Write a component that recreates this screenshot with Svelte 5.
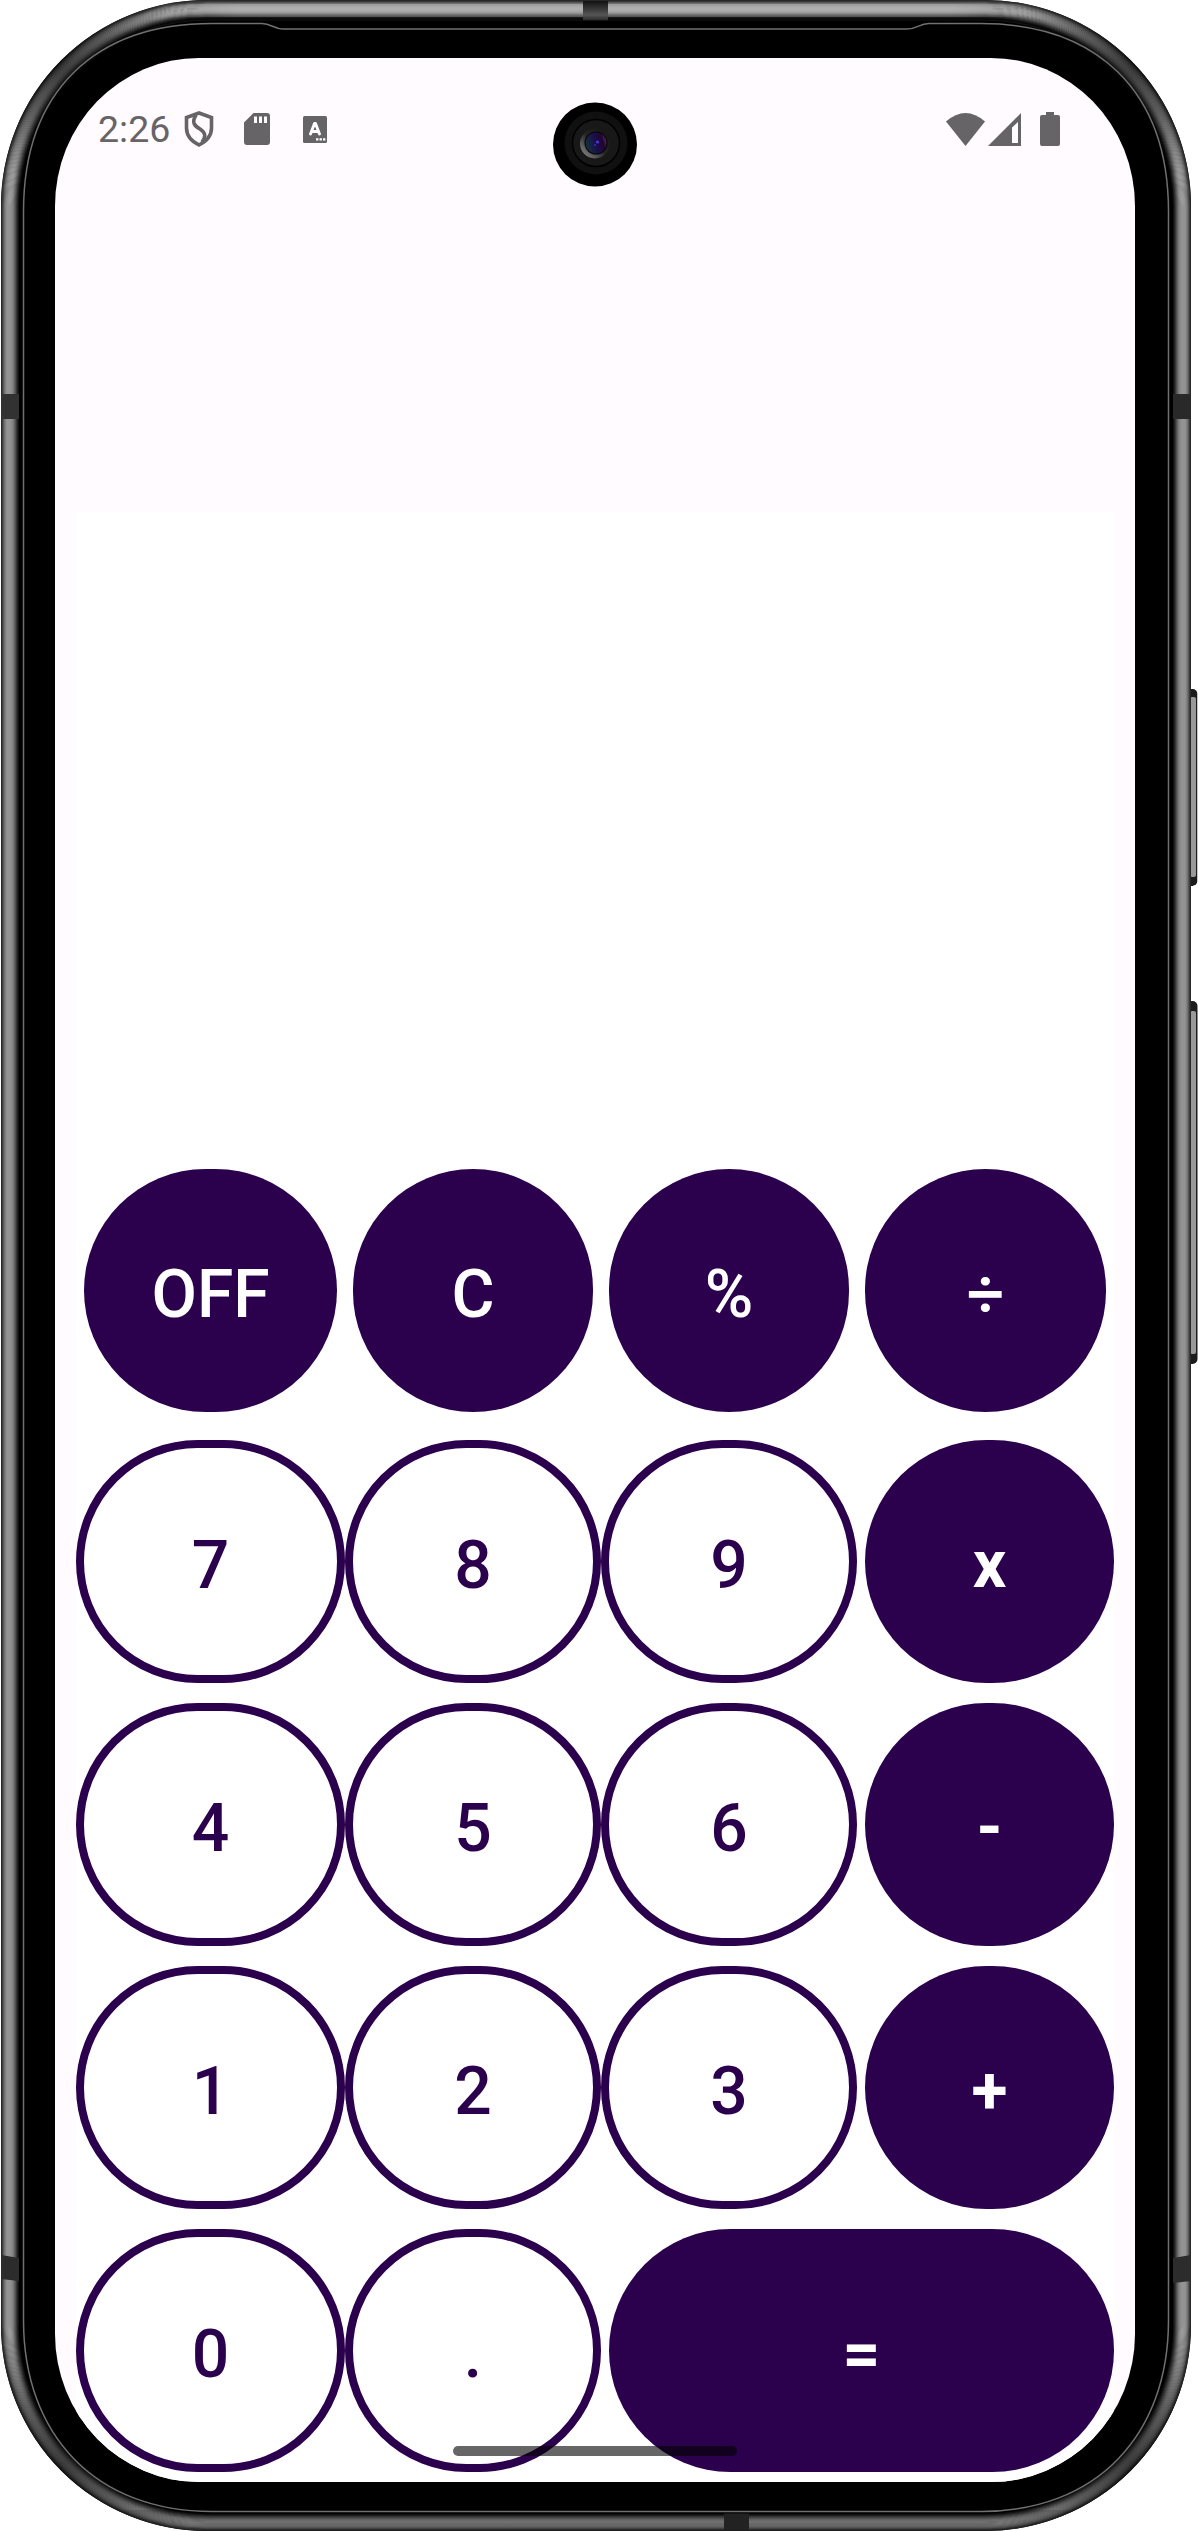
<script>
  const keys = [
    { label: 'OFF', kind: 'solid top' },
    { label: 'C', kind: 'solid top' },
    { label: '%', kind: 'solid top' },
    { label: '÷', kind: 'solid top' },
    { label: '7', kind: 'ring' },
    { label: '8', kind: 'ring' },
    { label: '9', kind: 'ring' },
    { label: 'x', kind: 'solid bold' },
    { label: '4', kind: 'ring' },
    { label: '5', kind: 'ring' },
    { label: '6', kind: 'ring' },
    { label: '-', kind: 'solid bold' },
    { label: '1', kind: 'ring' },
    { label: '2', kind: 'ring' },
    { label: '3', kind: 'ring' },
    { label: '+', kind: 'solid bold' },
    { label: '0', kind: 'ring' },
    { label: '.', kind: 'ring' },
    { label: '=', kind: 'solid bold wide' }
  ];

  // Brightness of the metal band, one step per pixel from the outer edge inwards.
  const band = [40, 58, 84, 108, 126, 138, 147, 152, 155, 156, 154, 148, 138, 122, 102, 82, 60, 40, 22, 8];
</script>

<div class="device">
  <svg class="frame" width="1198" height="2531" viewBox="0 0 1198 2531">
    <defs>
      <linearGradient id="topLight" x1="0" x2="1" y1="0" y2="0">
        <stop offset="0" stop-color="#fff" stop-opacity="0" />
        <stop offset=".1" stop-color="#fff" stop-opacity=".2" />
        <stop offset=".9" stop-color="#fff" stop-opacity=".2" />
        <stop offset="1" stop-color="#fff" stop-opacity="0" />
      </linearGradient>
      <linearGradient id="bottomShade" x1="0" x2="1" y1="0" y2="0">
        <stop offset="0" stop-color="#000" stop-opacity="0" />
        <stop offset=".14" stop-color="#000" stop-opacity=".28" />
        <stop offset=".86" stop-color="#000" stop-opacity=".28" />
        <stop offset="1" stop-color="#000" stop-opacity="0" />
      </linearGradient>
      <linearGradient id="seamTop" x1="0" x2="0" y1="0" y2="1">
        <stop offset="0" stop-color="#111" />
        <stop offset=".7" stop-color="#555" />
        <stop offset="1" stop-color="#222" />
      </linearGradient>
      <radialGradient id="dark">
        <stop offset="0" stop-color="#000" stop-opacity=".62" />
        <stop offset=".45" stop-color="#000" stop-opacity=".4" />
        <stop offset="1" stop-color="#000" stop-opacity="0" />
      </radialGradient>
      <clipPath id="body"><rect x="1" y="0" width="1190" height="2531" rx="206" /></clipPath>
    </defs>

    <!-- side buttons -->
    <rect x="1184" y="680" width="13.500" height="206" rx="5" fill="#1c1c1c" clip-path="inset(9px 0 0 0 round 5px)" />
    <rect x="1190" y="697" width="6" height="180" rx="2" fill="#999" />
    <rect x="1184" y="1001" width="13.500" height="363" rx="5" fill="#1c1c1c" />
    <rect x="1190" y="1011" width="6" height="343" rx="2" fill="#999" />

    <rect x="1" y="0" width="1190" height="2531" rx="206" fill="#151515" />
    {#each band as v, i}
      <rect
        x={1.7 + i * 0.93}
        y={0.7 + i * 0.96}
        width={1188.6 - i * 1.86}
        height={2529.6 - i * 1.86}
        rx={205 - i * 0.93}
        fill="none"
        stroke="rgb({v},{v},{v})"
        stroke-width="1.4"
      />
    {/each}
    <g clip-path="url(#body)">
      <rect x="150" y="4" width="890" height="13" fill="url(#topLight)" />
      <rect x="60" y="2510" width="1072" height="21" fill="url(#bottomShade)" />
      <circle cx="58" cy="62" r="120" fill="url(#dark)" />
      <circle cx="1134" cy="62" r="120" fill="url(#dark)" />
      <circle cx="58" cy="2469" r="145" fill="url(#dark)" />
      <circle cx="1134" cy="2469" r="145" fill="url(#dark)" />
    </g>

    <!-- antenna seams -->
    <rect x="583" y="1" width="25" height="20" fill="url(#seamTop)" />
    <rect x="724" y="2513" width="25" height="17" fill="#222" />
    <rect x="1" y="394" width="18" height="25" fill="#323232" />
    <rect x="1173" y="394" width="18" height="25" fill="#292929" />
    <path d="M1 2255l18 3v23l-18-2zM1191 2255l-18 3v25l18-2z" fill="#2c2c2c" />

    <!-- glass, with its fine rim line and earpiece step -->
    <rect x="19" y="20.500" width="1154" height="2493" rx="189" fill="#000" />
    <path
      d="M23.500 212C23.500 90 96 23.500 212 23.500H262C271 23.500 274 29 283 29H907C918 29 919 23.500 929 23.500H981C1096 23.500 1168.500 90 1168.500 212V2320C1168.500 2436 1096 2511.500 981 2511.500H212C96 2511.500 23.500 2436 23.500 2320Z"
      fill="none"
      stroke="#707070"
      stroke-width="1.500"
    />
  </svg>

  <main class="screen">
    <header class="status">
      <span class="clock">2:26</span>
      <svg class="shield" width="30" height="36" viewBox="0 0 30 36">
        <path d="M15 2L27.500 6.500V17C27.500 25 22 30.500 15 34C8 30.500 2.500 25 2.500 17V6.500Z" />
        <path d="M12 4C7 12 11 15 16 18C22 22 22 26 18 31" />
      </svg>
      <svg class="card" width="26" height="32" viewBox="0 0 26 32">
        <path fill-rule="evenodd" d="M9.500 0H23a3 3 0 0 1 3 3V29a3 3 0 0 1-3 3H3a3 3 0 0 1-3-3V9.500ZM10 3.500V10h3V3.500ZM15 3.500V10h3V3.500ZM20 3.500V10h3V3.500Z" />
      </svg>
      <svg class="letter" width="24" height="27" viewBox="0 0 24 27">
        <rect width="24" height="27" rx="1.500" />
        <path class="cut" d="M7.500 18L11.500 7.500H12.500L16.500 18M9 15.500H15" />
        <path class="dots" d="M13 22.200h2.400v2.400H13zM16.500 22.200h2.400v2.400h-2.400zM20 22.200h2.400v2.400H20z" />
      </svg>
      <span class="spacer"></span>
      <svg class="wifi" width="39" height="33" viewBox="0 0 39 33">
        <path d="M0 8.500Q19.500-8.500 39 8.500L19.500 33Z" />
      </svg>
      <svg class="signal" width="33" height="33" viewBox="0 0 33 33">
        <path fill-rule="evenodd" d="M33 0V33H0ZM30 9L24 14.500V30H30Z" />
      </svg>
      <svg class="battery" width="20" height="34" viewBox="0 0 20 34">
        <path d="M6 0H14V3H18A2 2 0 0 1 20 5V32A2 2 0 0 1 18 34H2A2 2 0 0 1 0 32V5A2 2 0 0 1 2 3H6Z" />
      </svg>
    </header>

    <section class="calculator">
      <output class="display"></output>
      <div class="keypad">
        {#each keys as key}
          <button class="key {key.kind}">{key.label}</button>
        {/each}
      </div>
    </section>
  </main>

  <svg class="camera" width="84" height="86" viewBox="0 0 84 86">
    <defs>
      <linearGradient id="glint" x1="0" x2="1" y1="1" y2="0">
        <stop offset="0" stop-color="#999" />
        <stop offset=".5" stop-color="#242424" />
        <stop offset="1" stop-color="#111" />
      </linearGradient>
      <linearGradient id="lens" x1="0" x2="1" y1=".4" y2=".1">
        <stop offset="0" stop-color="#142f3a" />
        <stop offset=".45" stop-color="#1a0d4c" />
        <stop offset=".75" stop-color="#22052e" />
        <stop offset="1" stop-color="#6b3a80" />
      </linearGradient>
    </defs>
    <circle cx="42" cy="42.500" r="42" fill="#000" />
    <circle cx="43" cy="41" r="31.500" fill="#101010" />
    <circle cx="43" cy="41" r="23.500" fill="#181818" stroke="#000" stroke-width="1.500" />
    <circle cx="42" cy="41.500" r="15" fill="url(#glint)" />
    <circle cx="43" cy="41" r="11.500" fill="#050508" />
    <circle cx="43" cy="41" r="10.500" fill="url(#lens)" />
    <circle cx="44.500" cy="40" r="1.600" fill="#4a38d8" />
    <circle cx="42" cy="43" r="1.100" fill="#3a2ab8" />
  </svg>
  <div class="home-bar"></div>
</div>

<style>
  :global(body) {
    margin: 0;
    background: #fff;
  }

  .device {
    position: relative;
    box-sizing: border-box;
    width: 1198px;
    height: 2531px;
    padding: 58px 63px 49px 55px;
    overflow: hidden;
    font-family: Roboto, 'Liberation Sans', sans-serif;
  }

  .frame {
    position: absolute;
    inset: 0;
  }

  .screen {
    position: relative;
    display: flex;
    flex-direction: column;
    width: 1080px;
    height: 2424px;
    overflow: hidden;
    border-radius: 144px / 148px;
    background: #fffbff;
  }

  .status {
    display: flex;
    flex: none;
    align-items: center;
    box-sizing: border-box;
    height: 142px;
    padding: 0 75px 0 43px;
    color: #676468;
  }

  .status svg {
    flex: none;
    fill: currentColor;
  }

  .clock {
    width: 86px;
    font-size: 37.500px;
    line-height: 44px;
  }

  .status .shield {
    fill: none;
    stroke: currentColor;
    stroke-width: 3.600;
  }

  .card {
    margin-left: 30px;
  }

  .letter {
    margin-left: 33px;
  }

  .letter .cut {
    fill: none;
    stroke: #fff;
    stroke-width: 2.900;
    stroke-linecap: round;
    stroke-linejoin: round;
  }

  .letter .dots {
    fill: #fff;
  }

  .spacer {
    flex: 1;
  }

  .signal {
    margin-left: 3px;
  }

  .battery {
    margin-left: 19px;
  }

  .calculator {
    display: flex;
    flex: 1;
    flex-direction: column;
    margin: 312px 21px 0;
    background: #fff;
  }

  .display {
    flex: 1;
  }

  .keypad {
    display: grid;
    grid-template-columns: 269px 256px 256px 257px;
    grid-template-rows: 243px;
    grid-auto-rows: 243px;
    row-gap: 20px;
    padding-bottom: 10px;
  }

  .key {
    box-sizing: border-box;
    margin: 0;
    padding: 8px 0 0;
    border: 0;
    border-radius: 122px;
    background: #2b004d;
    color: #fff;
    font: 500 66px/1 Roboto, 'Liberation Sans', sans-serif;
  }

  .top {
    margin: -8px 8px 8px;
  }

  .ring {
    border: 8px solid #2b004d;
    background: #fff;
    color: #2b004d;
  }

  .bold {
    margin-left: 8px;
    padding-top: 6px;
    font-weight: 700;
  }

  .wide {
    grid-column: span 2;
  }

  .camera {
    position: absolute;
    top: 102px;
    left: 553px;
  }

  .home-bar {
    position: absolute;
    top: 2446px;
    left: 453px;
    width: 284px;
    height: 10px;
    border-radius: 5px;
    background: rgba(0, 0, 0, 0.6);
  }
</style>
